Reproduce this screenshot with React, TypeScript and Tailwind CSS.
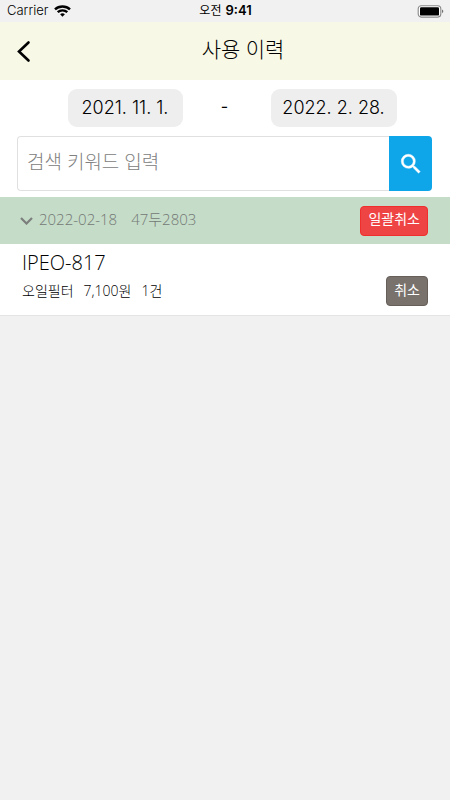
const history = [
  {
    date: "2022-02-18",
    car: "47두2803",
    items: [{ code: "IPEO-817", name: "오일필터", price: "7,100원", count: "1건" }],
  },
];

function StatusBar() {
  return (
    <div className="flex h-[22px] items-center justify-between bg-[#f1f1f1] pl-[7px] pr-[6px] font-['Inter','Noto_Sans_CJK_KR',sans-serif] text-xs">
      <div className="flex flex-1 items-center gap-[6px]">
        <span className="text-[13px] font-light">Carrier</span>
        <svg width="17" height="12" viewBox="0 0 17 12" fill="none" stroke="#000" strokeWidth="2.4">
          <path d="M1 4.4C5.1.5 11.9.5 16 4.4" />
          <path d="M3.7 7.2c2.7-2.5 6.9-2.5 9.6 0" />
          <path d="M6.1 9.2c1.4-1.2 3.4-1.2 4.8 0L8.5 11.8z" fill="#000" stroke="none" />
        </svg>
      </div>
      <span className="flex items-center gap-1 font-semibold">
        <span className="font-normal">오전</span>
        <span className="text-[13px]">9:41</span>
      </span>
      <div className="flex flex-1 justify-end">
        <svg width="27" height="13" viewBox="0 0 27 13">
          <rect x="1.2" y="0.7" width="22.6" height="11.4" rx="3" fill="#fff" stroke="#888" strokeWidth="1.1" />
          <rect x="3" y="2.2" width="19" height="8.4" rx="1.2" />
          <path d="M25.2 4.6c1.4.6 1.4 3 0 3.6z" fill="#555" />
        </svg>
      </div>
    </div>
  );
}

function Header() {
  return (
    <header className="flex h-[58px] items-center bg-[#f8f8e6]">
      <button aria-label="뒤로" className="flex h-full w-9 items-center pl-4">
        <svg width="16" height="24" viewBox="0 0 16 24" fill="none" stroke="#000" strokeWidth="2.6" strokeLinecap="round">
          <path d="M12.5 3.5L3 12.5L12.5 21.5" />
        </svg>
      </button>
      <h1 className="flex-1 pb-1 text-center text-[21px] leading-7">사용 이력</h1>
    </header>
  );
}

function DateRange() {
  return (
    <div className="flex items-center justify-center pl-[14px] pt-[9px] font-['Inter',sans-serif] text-lg">
      <button className="h-[38px] w-[115px] rounded-[9px] bg-[#eeeeee] whitespace-nowrap">2021. 11. 1.</button>
      <span className="w-[88px] pb-1 pr-1 text-center text-base font-normal leading-6">-</span>
      <button className="h-[38px] w-[126px] rounded-[9px] bg-[#eeeeee] whitespace-nowrap">2022. 2. 28.</button>
    </div>
  );
}

function SearchBar() {
  return (
    <form className="ml-[17px] mr-[18px] mt-[9px] flex h-[55px]" onSubmit={(e) => e.preventDefault()}>
      <input
        type="text"
        aria-label="검색 키워드 입력"
        placeholder="검색 키워드 입력"
        className="min-w-0 flex-1 rounded-l-[4px] border border-r-0 border-[#e0e0e0] bg-white px-[9px] pb-[2px] text-[19px] outline-none placeholder:text-[#808080]"
      />
      <button aria-label="검색" className="flex w-[43px] items-center justify-center rounded-r-[4px] bg-[#0ea5e9]">
        <svg width="26" height="26" viewBox="0 0 24 24" fill="#fff" stroke="#fff" strokeWidth="0.4">
          <path d="M15.5 14h-.79l-.28-.27A6.471 6.471 0 0 0 16 9.5 6.5 6.5 0 1 0 9.5 16c1.61 0 3.09-.59 4.23-1.57l.27.28v.79l5 4.99L20.49 19l-4.99-5zm-6 0C7.01 14 5 11.99 5 9.5S7.01 5 9.5 5 14 7.01 14 9.5 11.99 14 9.5 14z" />
        </svg>
      </button>
    </form>
  );
}

export default function App() {
  return (
    <div className="min-h-screen bg-[#f1f1f1] font-['Open_Sans','Noto_Sans_CJK_KR',sans-serif] font-light text-black">
      <StatusBar />
      <Header />
      <main className="border-b border-[#e4e4e4] bg-white">
        <DateRange />
        <SearchBar />
        {history.map((group) => (
          <section key={group.date} className="mt-[6px]">
            <div className="flex h-[47px] items-center justify-between bg-[#c5dcc8] pl-5 pr-[22px]">
              <button className="flex items-center gap-[6px] text-[15px] leading-5 text-[#737875]">
                <svg width="13" height="8" viewBox="0 0 13 8" fill="none" stroke="#7d7f7e" strokeWidth="2.2">
                  <path d="M1 1l5.5 5.5L12 1" />
                </svg>
                <span className="pb-1">{group.date}</span>
                <span className="ml-2 pb-1">{group.car}</span>
              </button>
              <button className="h-[30px] rounded-[4px] border border-[#f02e2e] bg-[#ef4444] px-[7px] pb-[3px] text-sm font-normal text-white">
                일괄취소
              </button>
            </div>
            {group.items.map((item) => (
              <div key={item.code} className="flex items-end justify-between px-[22px] pb-[9px] pt-[5px]">
                <div>
                  <p className="text-xl leading-7">{item.code}</p>
                  <p className="flex gap-[10px] pb-px text-sm leading-7">
                    <span>{item.name}</span>
                    <span>{item.price}</span>
                    <span>{item.count}</span>
                  </p>
                </div>
                <button className="h-[30px] rounded-[4px] border border-[#665f59] bg-[#78716c] px-[7px] pb-[3px] text-sm font-normal text-white">
                  취소
                </button>
              </div>
            ))}
          </section>
        ))}
      </main>
    </div>
  );
}
